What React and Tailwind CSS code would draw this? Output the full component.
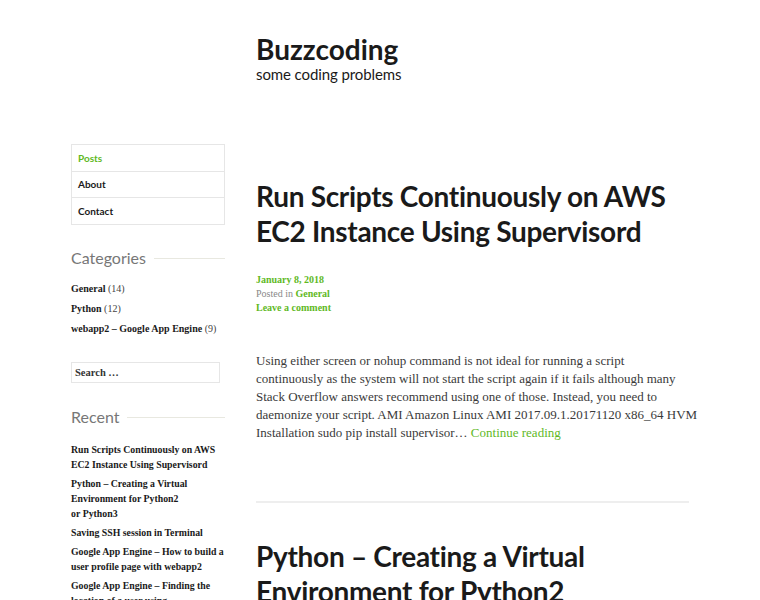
import React from "react";

const sans = "font-['Lato','Noto_Sans',sans-serif]";
const serif = "font-['Liberation_Serif','DejaVu_Serif',serif]";

const categories = [
  { name: "General", count: 14 },
  { name: "Python", count: 12 },
  { name: "webapp2 – Google App Engine", count: 9 },
];

const recent = [
  "Run Scripts Continuously on AWS EC2 Instance Using Supervisord",
  "Python – Creating a Virtual Environment for Python2 or\u00a0Python3",
  "Saving SSH session in Terminal",
  "Google App Engine – How to build a user profile page with webapp2",
  "Google App Engine – Finding the location of a user using",
];

// excerpt lines as they break in the theme
const excerpt = [
  "Using either screen or nohup command is not ideal for running a script",
  "continuously as the system will not start the script again if it fails although many",
  "Stack Overflow answers recommend using one of those. Instead, you need to",
  "daemonize your script. AMI Amazon Linux AMI 2017.09.1.20171120 x86_64 HVM",
];

const WidgetTitle = ({ children }) => (
  <div className="flex items-center gap-2">
    <h3 className={`${sans} text-[16px] text-[#777] font-normal whitespace-nowrap`}>{children}</h3>
    <div className="flex-1 h-px bg-[#e8e8e0]" />
  </div>
);

const App = () => {
  return (
    <div className="w-[760px] h-[600px] overflow-hidden bg-white text-[#1a1a1a]">
      <div className="flex gap-[31px] pl-[71px]">
        {/* sidebar */}
        <aside className="w-[154px] shrink-0 pt-[144px]">
          <nav className={`${sans} border border-[#e6e6e6] text-[10px] font-bold`}>
            <div className="h-[27px] flex items-center px-[6px] border-b border-[#e6e6e6] text-[#61b91f]">Posts</div>
            <div className="h-[26px] flex items-center px-[6px] border-b border-[#e6e6e6]">About</div>
            <div className="h-[26px] flex items-center px-[6px]">Contact</div>
          </nav>

          <div className="mt-[21px]">
            <WidgetTitle>Categories</WidgetTitle>
            <ul className={`${serif} mt-[12px] text-[10px] space-y-[6px]`}>
              {categories.map((c) => (
                <li key={c.name} className="leading-[14px] whitespace-nowrap">
                  <span className="font-bold">{c.name}</span> <span className="text-[#444]">({c.count})</span>
                </li>
              ))}
            </ul>
          </div>

          <div className="mt-[26px]">
            <div className={`${serif} w-[149px] h-[21px] border border-[#e6e6e6] flex items-center px-[3px] text-[10.5px] font-bold text-[#333]`}>
              Search …
            </div>
          </div>

          <div className="mt-[22px]">
            <WidgetTitle>Recent</WidgetTitle>
            <ul className={`${serif} mt-[13px] text-[9.8px] font-bold leading-[15px] space-y-[4px] -mr-[2px]`}>
              {recent.map((r) => (
                <li key={r}>{r}</li>
              ))}
            </ul>
          </div>
        </aside>

        {/* main */}
        <main className="w-[433px] shrink-0">
          <header className={`${sans} pt-[33px]`}>
            <h1 className="text-[28px] font-bold leading-[32px] text-[#1a1a1a]">Buzzcoding</h1>
            <p className="text-[15px] leading-[18px] text-[#1a1a1a] tracking-[-0.1px]">some coding problems</p>
          </header>

          <article className="mt-[96px]">
            <h2 className={`${sans} text-[28px] font-bold leading-[35px] tracking-[-0.3px] text-[#1a1a1a]`}>
              Run Scripts Continuously on AWS EC2 Instance Using Supervisord
            </h2>
            <div className={`${serif} mt-[24px] text-[10px] leading-[14px] font-bold`}>
              <div className="text-[#61b91f]">January 8, 2018</div>
              <div className="text-[#888] font-normal">
                Posted in <span className="text-[#61b91f] font-bold">General</span>
              </div>
              <div className="text-[#61b91f]">Leave a comment</div>
            </div>
            <p className={`${serif} mt-[37px] w-[450px] text-[13px] leading-[18px] text-[#3a3a3a]`}>
              {excerpt.map((line) => (
                <React.Fragment key={line}>
                  {line}
                  <br />
                </React.Fragment>
              ))}
              Installation sudo pip install supervisor…{" "}
              <span className="text-[#61b91f]">Continue reading</span>
            </p>
          </article>

          <hr className="mt-[59px] border-0 h-[2px] bg-[#eeeeee]" />

          <article className="mt-[36px]">
            <h2 className={`${sans} text-[28px] font-bold leading-[35px] tracking-[-0.3px] text-[#1a1a1a]`}>
              Python – Creating a Virtual Environment for Python2
            </h2>
          </article>
        </main>
      </div>
    </div>
  );
};

export default App;
